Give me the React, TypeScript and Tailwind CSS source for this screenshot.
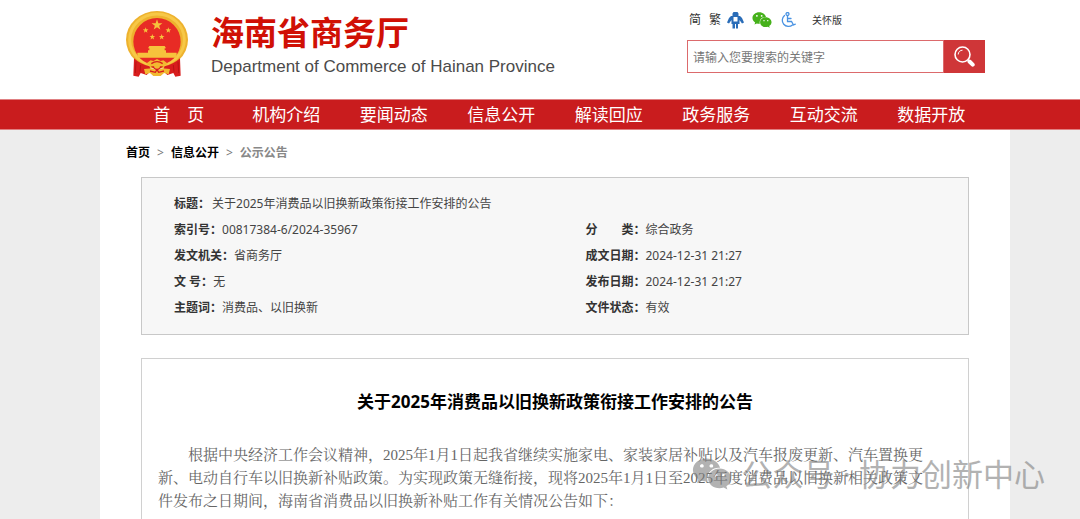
import { FaWeixin } from "react-icons/fa"

const navItems = ["首　页", "机构介绍", "要闻动态", "信息公开", "解读回应", "政务服务", "互动交流", "数据开放"]

const details = [
  { label: "索引号：", value: "00817384-6/2024-35967" },
  { label: "分　　类：", value: "综合政务" },
  { label: "发文机关：", value: "省商务厅" },
  { label: "成文日期：", value: "2024-12-31 21:27" },
  { label: "文 号：", value: "无" },
  { label: "发布日期：", value: "2024-12-31 21:27" },
  { label: "主题词：", value: "消费品、以旧换新" },
  { label: "文件状态：", value: "有效" },
]

const STAR = "M0 -10 L2.4 -3.2 L9.5 -3.1 L3.8 1.2 L5.9 8.1 L0 4 L-5.9 8.1 L-3.8 1.2 L-9.5 -3.1 L-2.4 -3.2 Z"

function Emblem() {
  return (
    <svg viewBox="0 0 186 198" className="h-[66px] w-[62px] shrink-0" aria-hidden="true">
      <ellipse cx="93" cy="86" rx="93" ry="86" fill="#eeb22e" />
      <ellipse cx="93" cy="86" rx="82" ry="77" fill="none" stroke="#f7c847" strokeWidth="9" />
      <circle cx="93" cy="92" r="71" fill="#e82b25" />
      <g fill="#f6c33c">
        <path d={STAR} transform="translate(93 42) scale(1.7)" />
        <path d={STAR} transform="translate(59 58) scale(.9)" />
        <path d={STAR} transform="translate(127 58) scale(.9)" />
        <path d={STAR} transform="translate(79 78) scale(.9)" />
        <path d={STAR} transform="translate(107 78) scale(.9)" />
        <path d="M70 105 H116 L120 112 H116 V118 H120 V125 H152 V140 H34 V125 H66 V118 H70 V112 H66 Z" />
      </g>
      <path d="M24 142 Q44 160 70 166 L76 178 L62 192 L44 186 L38 197 L22 194 Z" fill="#d81d1d" />
      <path d="M162 142 Q142 160 116 166 L110 178 L124 192 L142 186 L148 197 L164 194 Z" fill="#d81d1d" />
      <path d="M30 152 L28 186 M44 162 L42 182 M156 152 L158 186 M142 162 L144 182" stroke="#b91414" strokeWidth="3" />
      <path d="M60 158 L74 148 L82 150 L93 144 L104 150 L112 148 L126 158 L112 166 H74 Z" fill="#f2b931" />
      <path d="M54 174 L78 172 L93 178 L108 172 L132 174 L128 190 L114 186 L104 195 H82 L72 186 L58 190 Z" fill="#f2b931" />
      <path d="M76 158 Q93 146 110 158 M72 180 L88 184 L93 176 L98 184 L114 180" fill="none" stroke="#d81d1d" strokeWidth="4" />
      <path d="M74 166 H112 L93 180 Z" fill="#d81d1d" />
      <circle cx="93" cy="164" r="9" fill="#f2b931" />
    </svg>
  )
}

function RobotIcon() {
  return (
    <svg viewBox="0 0 17 17" className="h-[17px] w-[17px]" fill="#2a6db8" aria-hidden="true">
      <path fillRule="evenodd" d="M6.5 0H10.5L11.5 1.5V4H13L15 6L17 10.5L15 11.5L12.5 8V12H11V16.5H9V12H8V16.5H5.5V12H4.5V8L2 11.5L0 10.5L2 6L4 4H5.5V1.5ZM6.5 5V9.5H10.5V5Z" />
    </svg>
  )
}

function AccessIcon() {
  return (
    <svg viewBox="0 0 16 16" className="h-4 w-4" fill="none" stroke="#4a93e2" strokeWidth="1.3" strokeLinecap="round" aria-hidden="true">
      <circle cx="7.5" cy="2" r="1.5" />
      <path d="M7.5 4V9.5H11.5L13.5 13L15.3 12.2M7.5 6.5H11" />
      <path d="M4.5 3.5A6 6 0 1 0 12.5 13" />
    </svg>
  )
}

function SearchIcon() {
  return (
    <svg viewBox="0 0 21 21" className="h-[21px] w-[21px]" fill="none" stroke="#fff" aria-hidden="true">
      <circle cx="8.5" cy="8.5" r="7.5" strokeWidth="1.6" />
      <path d="M4.2 8.5A4.3 4.3 0 0 1 8.5 4.2" strokeWidth="1" />
      <path d="M14 14L15.5 15.5" strokeWidth="2" />
      <path d="M15.5 15.5L18.7 18.7" strokeWidth="4" strokeLinecap="round" />
    </svg>
  )
}

function Header() {
  return (
    <header className="bg-white">
      <div className="ml-[100px] mr-[70px] flex h-[99px] items-start justify-between pr-[25px] pl-[26px]">
        <div className="flex gap-[23px] pt-[11px]">
          <Emblem />
          <div>
            <h1 className="text-[33px] leading-[44px] font-bold text-[#d01005]">海南省商务厅</h1>
            <p className="font-['Liberation_Sans',sans-serif] text-[17px] leading-6 text-[#4b4b4b]">
              Department of Commerce of Hainan Province
            </p>
          </div>
        </div>
        <div className="w-[298px] pt-[11px]">
          <div className="flex h-[18px] items-center text-[12px] text-[#333]">
            <a href="#" className="ml-[2px]">简</a>
            <a href="#" className="ml-2">繁</a>
            <a href="#" className="ml-[6px]" aria-label="机器人"><RobotIcon /></a>
            <a href="#" className="ml-2" aria-label="微信"><FaWeixin className="h-5 w-5 text-[#46b11b]" /></a>
            <a href="#" className="ml-2" aria-label="无障碍"><AccessIcon /></a>
            <a href="#" className="ml-4 text-[10px]">关怀版</a>
          </div>
          <form className="mt-[11px] flex h-[33px]">
            <input
              type="text"
              aria-label="搜索"
              placeholder="请输入您要搜索的关键字"
              className="min-w-0 flex-1 border border-[#dc6a6c] px-[5px] pt-[2px] text-[12px] placeholder:text-[#777] outline-none"
            />
            <button type="button" aria-label="搜索" className="flex w-[41px] items-center justify-center bg-[#cf3638]">
              <SearchIcon />
            </button>
          </form>
        </div>
      </div>
      <nav className="border-y border-[#e08082] bg-[#c91c1e]">
        <ul className="ml-[100px] mr-[70px] grid grid-cols-8 px-[25px] pt-px text-center text-[17px] leading-7 text-white">
          {navItems.map((item) => (
            <li key={item}>
              <a href="#">{item}</a>
            </li>
          ))}
        </ul>
      </nav>
    </header>
  )
}

export default function App() {
  return (
    <div className="relative h-screen overflow-hidden bg-[#ededed] font-['Noto_Sans','Noto_Sans_CJK_SC',sans-serif]">
      <Header />

      <main className="ml-[100px] mr-[70px] h-full bg-white">
        <div className="flex h-[47px] items-center gap-[7px] px-[26px] pb-[2px] text-[12px] font-bold text-black">
          <a href="#">首页</a>
          <span className="font-normal text-[#777]">&gt;</span>
          <a href="#">信息公开</a>
          <span className="font-normal text-[#777]">&gt;</span>
          <a href="#" className="text-[#888]">公示公告</a>
        </div>

        <dl className="mx-[41px] grid grid-cols-[54%_46%] border border-[#c8c8c8] bg-[#f7f7f7] px-8 py-[13px] text-[12px] leading-[26px] text-[#444]">
          <div className="col-span-2 flex gap-[2px]">
            <dt className="font-bold text-[#333]">标题：</dt>
            <dd>关于2025年消费品以旧换新政策衔接工作安排的公告</dd>
          </div>
          {details.map((item) => (
            <div key={item.label} className="flex">
              <dt className="font-bold text-[#333]">{item.label}</dt>
              <dd>{item.value}</dd>
            </div>
          ))}
        </dl>

        <article className="mx-[41px] mt-[23px] h-full border border-[#d0d0d0] pt-[29px]">
          <h2 className="text-center text-[17px] leading-7 font-bold text-black">
            关于2025年消费品以旧换新政策衔接工作安排的公告
          </h2>
          <p className="mt-7 mr-10 ml-4 indent-[2em] font-['Liberation_Serif','Noto_Serif_CJK_SC','Noto_Sans_CJK_SC',serif] text-[15px] leading-[23px] text-[#666]">
            根据中央经济工作会议精神，2025年1月1日起我省继续实施家电、家装家居补贴以及汽车报废更新、汽车置换更新、电动自行车以旧换新补贴政策。为实现政策无缝衔接，现将2025年1月1日至2025年度消费品以旧换新相关政策文件发布之日期间，海南省消费品以旧换新补贴工作有关情况公告如下：
          </p>
        </article>
      </main>

      <div className="pointer-events-none absolute right-[35px] bottom-[25px] flex items-center gap-[10px] text-[31px] leading-10 text-[#808080] opacity-60">
        <FaWeixin className="h-10 w-10" />
        <span>公众号 · 协力创新中心</span>
      </div>
    </div>
  )
}
